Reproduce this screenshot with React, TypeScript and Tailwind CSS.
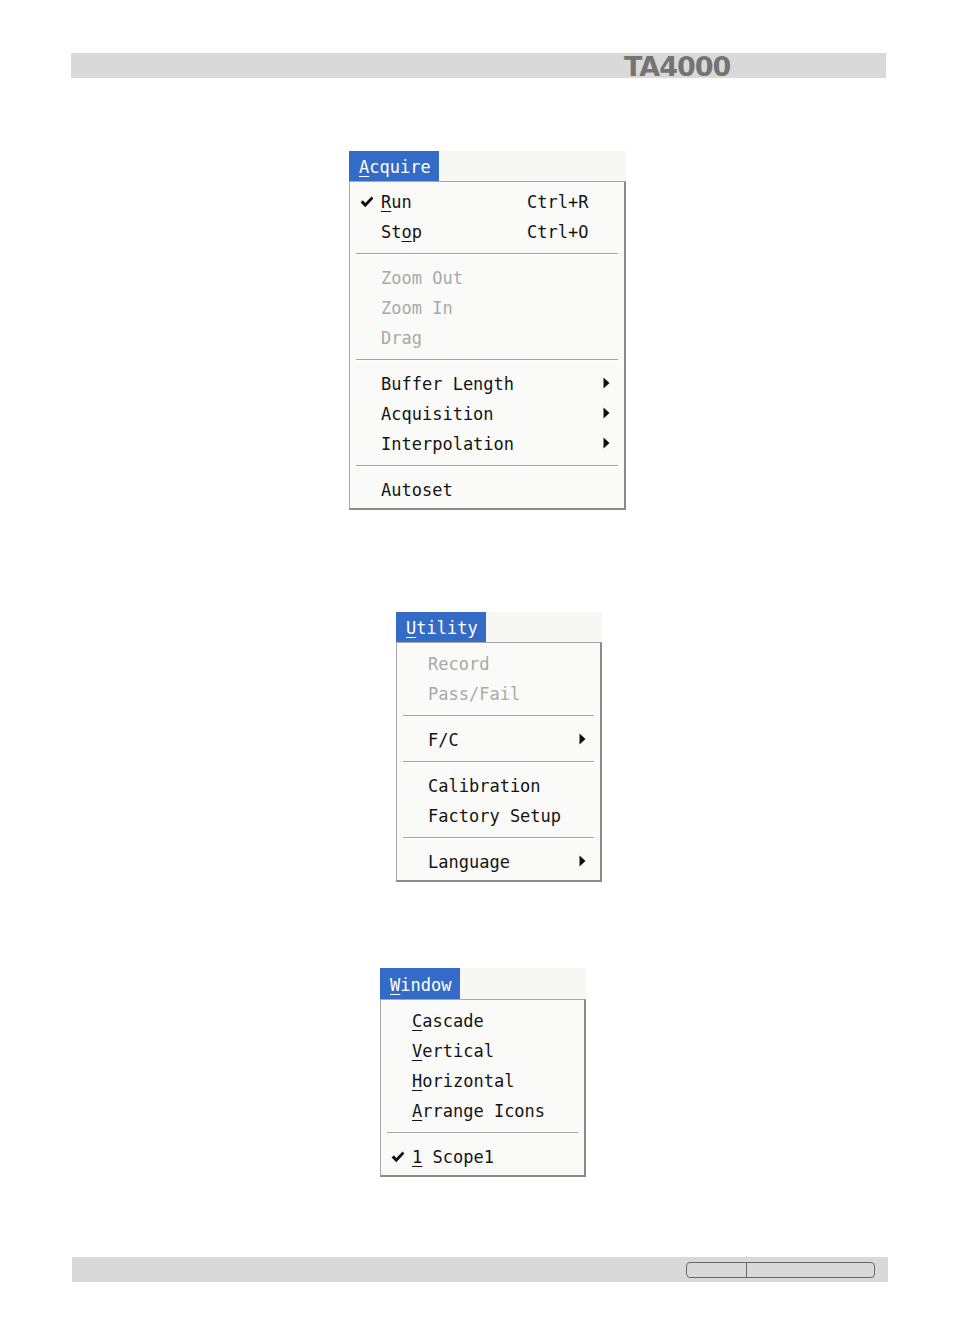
import React from "react";

type Item =
  | { kind: "sep" }
  | {
      kind: "item";
      label: string;
      ul?: number;
      disabled?: boolean;
      checked?: boolean;
      shortcut?: string;
      sub?: boolean;
    };

const mono = { fontFamily: '"DejaVu Sans Mono", "Liberation Mono", monospace' };

function Check() {
  return (
    <svg width="14" height="12" viewBox="0 0 14 12" className="block">
      <path d="M0.6 6.4 L2.9 4.3 L5.3 7.1 L11.5 0.6 L13.4 2.5 L5.3 11.2 Z" fill="#111" />
    </svg>
  );
}

function Arrow() {
  return (
    <svg width="7" height="12" viewBox="0 0 7 12" className="block">
      <path d="M0.5 0.5 L6.5 6 L0.5 11.5 Z" fill="#111" />
    </svg>
  );
}

function Label({ text, ul }: { text: string; ul?: number }) {
  if (ul === undefined) return <>{text}</>;
  return (
    <>
      {text.slice(0, ul)}
      <span className="underline underline-offset-[3px] decoration-1">{text[ul]}</span>
      {text.slice(ul + 1)}
    </>
  );
}

function Menu({
  title,
  titleUl,
  titleW,
  titleH,
  ml,
  w,
  pad,
  shortcutX,
  items,
}: {
  title: string;
  titleUl: number;
  titleW: string;
  titleH: string;
  ml: string;
  w: string;
  pad: string;
  shortcutX?: string;
  items: Item[];
}) {
  return (
    <div className={`${ml} ${w} flex flex-col`} style={mono}>
      <div className={`flex ${titleH}`}>
        <div className={`${titleW} h-full bg-[#336bc6] flex items-center pl-[10px] pt-[4px] text-white text-[17px]`}>
          <Label text={title} ul={titleUl} />
        </div>
        <div className="flex-1 h-full bg-[#f7f7f5]" />
      </div>
      <div className={`border border-l-[#a8a8a8] border-t-[#a8a8a8] border-r-[#8a8a8a] border-b-[#8a8a8a] border-r-2 border-b-2 bg-[#fafaf8] ${pad}`}>
        {items.map((it, i) =>
          it.kind === "sep" ? (
            <div key={i} className="h-[16px] flex flex-col justify-center px-[6px]">
              <div className="h-px bg-[#a4a4a4]" />
              <div className="h-px bg-white" />
            </div>
          ) : (
            <div
              key={i}
              className={`relative h-[30px] flex items-center pl-[31px] pr-[14px] pt-[3px] text-[17px] ${
                it.disabled ? "text-[#a9a9a9]" : "text-[#141414]"
              }`}
            >
              {it.checked && (
                <div className="absolute left-[10px] top-[10px]">
                  <Check />
                </div>
              )}
              <span className="whitespace-pre">
                <Label text={it.label} ul={it.ul} />
              </span>
              {it.shortcut && (
                <span className={`absolute ${shortcutX} whitespace-pre`}>{it.shortcut}</span>
              )}
              {it.sub && (
                <div className="ml-auto -mt-[4px]">
                  <Arrow />
                </div>
              )}
            </div>
          )
        )}
      </div>
    </div>
  );
}

export default function App() {
  const acquire: Item[] = [
    { kind: "item", label: "Run", ul: 0, checked: true, shortcut: "Ctrl+R" },
    { kind: "item", label: "Stop", ul: 2, shortcut: "Ctrl+O" },
    { kind: "sep" },
    { kind: "item", label: "Zoom Out", disabled: true },
    { kind: "item", label: "Zoom In", disabled: true },
    { kind: "item", label: "Drag", disabled: true },
    { kind: "sep" },
    { kind: "item", label: "Buffer Length", sub: true },
    { kind: "item", label: "Acquisition", sub: true },
    { kind: "item", label: "Interpolation", sub: true },
    { kind: "sep" },
    { kind: "item", label: "Autoset" },
  ];
  const utility: Item[] = [
    { kind: "item", label: "Record", disabled: true },
    { kind: "item", label: "Pass/Fail", disabled: true },
    { kind: "sep" },
    { kind: "item", label: "F/C", sub: true },
    { kind: "sep" },
    { kind: "item", label: "Calibration" },
    { kind: "item", label: "Factory Setup" },
    { kind: "sep" },
    { kind: "item", label: "Language", sub: true },
  ];
  const windowItems: Item[] = [
    { kind: "item", label: "Cascade", ul: 0 },
    { kind: "item", label: "Vertical", ul: 0 },
    { kind: "item", label: "Horizontal", ul: 0 },
    { kind: "item", label: "Arrange Icons", ul: 0 },
    { kind: "sep" },
    { kind: "item", label: "1 Scope1", ul: 0, checked: true },
  ];

  return (
    <div className="w-[954px] h-[1336px] bg-white flex flex-col overflow-hidden">
      <div className="mt-[53px] ml-[71px] w-[815px] h-[25px] bg-[#d9d9d9] flex items-center pl-[553px]">
        <span
          className="text-[27px] font-bold tracking-[-1px] text-[#747474] leading-none mt-[1px]"
          style={{ fontFamily: '"DejaVu Sans", Verdana, sans-serif' }}
        >
          TA4000
        </span>
      </div>

      <div className="mt-[73px]">
        <Menu
          title="Acquire"
          titleUl={0}
          titleW="w-[90px]"
          titleH="h-[30px]"
          ml="ml-[349px]"
          w="w-[277px]"
          pad="pt-[4px] pb-[4px]"
          shortcutX="left-[177px]"
          items={acquire}
        />
      </div>

      <div className="mt-[102px]">
        <Menu
          title="Utility"
          titleUl={0}
          titleW="w-[90px]"
          titleH="h-[30px]"
          ml="ml-[396px]"
          w="w-[206px]"
          pad="pt-[5px] pb-[4px]"
          items={utility}
        />
      </div>

      <div className="mt-[86px]">
        <Menu
          title="Window"
          titleUl={0}
          titleW="w-[80px]"
          titleH="h-[31px]"
          ml="ml-[380px]"
          w="w-[206px]"
          pad="pt-[5px] pb-[4px]"
          items={windowItems}
        />
      </div>

      <div className="mt-[80px] ml-[72px] w-[816px] h-[25px] bg-[#d9d9d9] flex items-center pl-[614px]">
        <div className="w-[189px] h-[16px] rounded-[4px] border border-[#6a6a6a] flex">
          <div className="w-[60px] h-full border-r border-[#6a6a6a]" />
        </div>
      </div>
    </div>
  );
}
